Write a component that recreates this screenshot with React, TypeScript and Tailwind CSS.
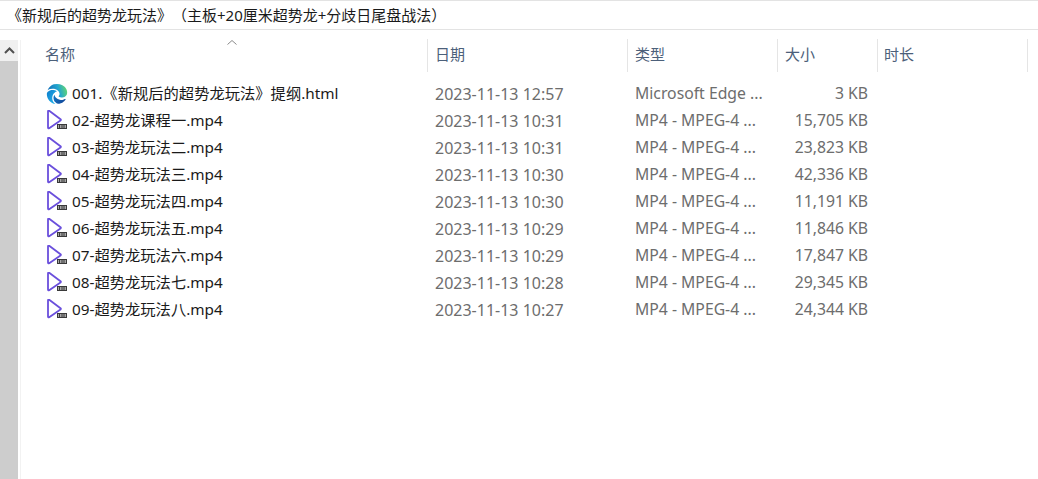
const font = '[font-family:"Noto_Sans","Noto_Sans_CJK_SC",sans-serif]'

const files = [
  { name: '02-超势龙课程一.mp4', date: '2023-11-13 10:31', size: '15,705 KB' },
  { name: '03-超势龙玩法二.mp4', date: '2023-11-13 10:31', size: '23,823 KB' },
  { name: '04-超势龙玩法三.mp4', date: '2023-11-13 10:30', size: '42,336 KB' },
  { name: '05-超势龙玩法四.mp4', date: '2023-11-13 10:30', size: '11,191 KB' },
  { name: '06-超势龙玩法五.mp4', date: '2023-11-13 10:29', size: '11,846 KB' },
  { name: '07-超势龙玩法六.mp4', date: '2023-11-13 10:29', size: '17,847 KB' },
  { name: '08-超势龙玩法七.mp4', date: '2023-11-13 10:28', size: '29,345 KB' },
  { name: '09-超势龙玩法八.mp4', date: '2023-11-13 10:27', size: '24,344 KB' },
]

function EdgeIcon() {
  return (
    <svg width="22" height="22" viewBox="-1 -1 26 26" className="shrink-0">
      <defs>
        <linearGradient id="edgeTop" x1="0" y1="0.5" x2="1" y2="0.3">
          <stop offset="0" stopColor="#0f6cb8" />
          <stop offset="0.55" stopColor="#23a6cf" />
          <stop offset="1" stopColor="#66d86e" />
        </linearGradient>
        <linearGradient id="edgeLeft" x1="0" y1="0" x2="1" y2="1">
          <stop offset="0" stopColor="#0d7ccb" />
          <stop offset="1" stopColor="#27bdf0" />
        </linearGradient>
        <linearGradient id="edgeBottom" x1="0" y1="0" x2="1" y2="0.4">
          <stop offset="0" stopColor="#1277c4" />
          <stop offset="1" stopColor="#124a9c" />
        </linearGradient>
      </defs>
      <path d="M21.86 17.86q.14 0 .25.12.1.13.1.25t-.11.33l-.32.46-.43.53-.44.5q-.21.25-.38.42l-.22.23q-.58.53-1.34 1.04-.76.51-1.6.91-.86.4-1.74.64t-1.67.24q-.9 0-1.69-.28-.8-.28-1.48-.78-.68-.5-1.22-1.17-.53-.66-.92-1.44-.38-.77-.58-1.6-.2-.83-.2-1.67 0-1 .32-1.96.33-.97.87-1.8.14.95.55 1.77.41.82 1.02 1.5.6.68 1.38 1.21.78.54 1.64.9.86.36 1.77.56.92.2 1.8.2 1.12 0 2.18-.24 1.06-.23 2.06-.72l.2-.1.2-.05z" fill="url(#edgeBottom)" />
      <path d="M6.36 16.59q0 1.1.27 2.15.27 1.06.78 2.03.51.96 1.24 1.77.74.82 1.66 1.4-1.47-.2-2.8-.74-1.33-.55-2.48-1.37-1.15-.83-2.08-1.9-.92-1.07-1.58-2.33T.36 14.94Q0 13.54 0 12.06q0-.81.32-1.49.31-.68.83-1.23.53-.55 1.2-.96.66-.4 1.35-.66.74-.27 1.5-.39.78-.12 1.55-.12.7 0 1.42.1.72.12 1.4.35.68.23 1.32.57.63.35 1.16.83-.35 0-.7.07-.33.07-.65.23v-.02q-.63.28-1.2.74-.57.46-1.05 1.04-.48.58-.87 1.26-.38.67-.65 1.39-.27.71-.42 1.44-.15.72-.15 1.38z" fill="url(#edgeLeft)" />
      <path d="M11.96.06q1.7 0 3.33.39 1.63.38 3.07 1.15 1.43.77 2.62 1.93 1.18 1.16 1.98 2.7.49.94.76 1.96.28 1 .28 2.08 0 .89-.23 1.7-.24.8-.69 1.48-.45.68-1.1 1.22-.64.53-1.45.88-.54.24-1.11.36-.58.13-1.16.13-.42 0-.97-.03-.54-.03-1.1-.12-.55-.1-1.05-.28-.5-.19-.84-.5-.12-.09-.23-.24-.1-.16-.1-.33 0-.15.16-.35.16-.2.35-.5.2-.28.36-.68.16-.4.16-.95 0-1.06-.4-1.96-.4-.91-1.06-1.64-.66-.74-1.52-1.28-.86-.55-1.79-.89-.84-.3-1.72-.44-.87-.14-1.76-.14-1.55 0-3.06.45T.94 7.55q.71-1.74 1.81-3.13 1.1-1.38 2.52-2.35Q6.68 1.1 8.37.58q1.7-.52 3.58-.52Z" fill="url(#edgeTop)" />
    </svg>
  )
}

function VideoIcon() {
  return (
    <svg width="22" height="22" viewBox="0 0 22 22" className="shrink-0">
      <path d="M2 1.500 V17.500 Q2 18.800 3.200 18.200 L14.500 10.500 Q15.300 9.800 14.500 9.200 L3.200 .8 Q2 .2 2 1.500 Z" fill="#fff" stroke="#6a4fdc" strokeWidth="1.800" strokeLinejoin="round" />
      <rect x="11" y="14" width="10" height="5" fill="#3a3a3a" />
      <path d="M12.500 15v3M14.500 15v3M16 15v3M18 15v3M19.500 15v3" stroke="#c4c4c4" strokeWidth="0.800" />
    </svg>
  )
}

function FileRow({ icon, name, date, type, size }: { icon: React.ReactNode; name: string; date: string; type: string; size: string }) {
  return (
    <div className="flex h-[27px] items-center text-[15.75px] text-[#6d6d6d]">
      <div className="flex w-[390px] items-center gap-[4px] pl-[1px] text-[15.3px] text-[#1a1a1a]">
        {icon}
        <span className="whitespace-nowrap">{name}</span>
      </div>
      <div className="w-[200px] whitespace-nowrap text-[16px]">{date}</div>
      <div className="w-[150px] whitespace-nowrap">{type}</div>
      <div className="w-[83px] whitespace-nowrap text-right">{size}</div>
    </div>
  )
}

export default function App() {
  return (
    <div className={`${font} h-[479px] w-[1038px] overflow-hidden bg-white`}>
      <div className="flex h-[30px] items-center whitespace-nowrap border-y border-[#e3e3e3] pl-[7px] text-[15px] text-[#1a1a1a] [text-spacing-trim:space-all]">
        《新规后的超势龙玩法》（主板+20厘米超势龙+分歧日尾盘战法）
      </div>
      <div className="flex">
        <div className="mt-[10px] h-[439px] w-[21px] shrink-0 border-r border-[#f2f2f2]">
          <div className="flex h-[21px] w-[18px] items-center justify-center bg-[#f0f0f0]">
            <svg width="11" height="7" viewBox="0 0 11 7">
              <path d="M1 6 L5.500 1.500 L10 6" fill="none" stroke="#505050" strokeWidth="2" />
            </svg>
          </div>
          <div className="h-[418px] w-[18px] bg-[#cdcdcd]" />
        </div>
        <div className="ml-[24px] flex-1">
          <div className="relative mt-[9px] flex h-[33px] text-[15px] text-[#4c607a]">
            <svg width="10" height="5" viewBox="0 0 10 5" className="absolute left-[182px] top-[1px]">
              <path d="M0.500 4.500 L5 0.500 L9.500 4.500" fill="none" stroke="#8a8a8a" strokeWidth="1" />
            </svg>
            <div className="flex w-[383px] items-center border-r border-[#e5e5e5] pb-[2px]">名称</div>
            <div className="flex w-[200px] items-center border-r border-[#e5e5e5] pb-[2px] pl-[7px]">日期</div>
            <div className="flex w-[150px] items-center border-r border-[#e5e5e5] pb-[2px] pl-[7px]">类型</div>
            <div className="flex w-[100px] items-center border-r border-[#e5e5e5] pb-[2px] pl-[7px]">大小</div>
            <div className="flex w-[150px] items-center border-r border-[#e5e5e5] pb-[2px] pl-[6px]">时长</div>
          </div>
          <div className="mt-[8px]">
            <FileRow icon={<EdgeIcon />} name="001.《新规后的超势龙玩法》提纲.html" date="2023-11-13 12:57" type="Microsoft Edge ..." size="3 KB" />
            {files.map((f) => (
              <FileRow key={f.name} icon={<VideoIcon />} name={f.name} date={f.date} type="MP4 - MPEG-4 ..." size={f.size} />
            ))}
          </div>
        </div>
      </div>
    </div>
  )
}
